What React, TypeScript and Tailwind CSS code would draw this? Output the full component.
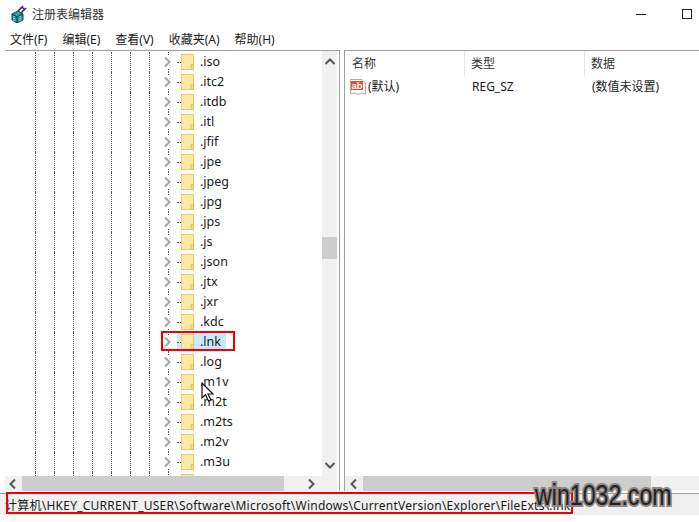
const FONT = "font-['Noto_Sans','Noto_Sans_CJK_SC',sans-serif]";
const names = [".iso",".itc2",".itdb",".itl",".jfif",".jpe",".jpeg",".jpg",".jps",".js",".json",".jtx",".jxr",".kdc",".lnk",".log",".m1v",".m2t",".m2ts",".m2v",".m3u",""];
const menus = ["文件(F)","编辑(E)","查看(V)","收藏夹(A)","帮助(H)"];

function Folder() {
  return (
    <svg width="13" height="16" viewBox="0 0 13 16" className="shrink-0">
      <rect x="0.5" y="0.5" width="12" height="15" fill="#fde9a6" stroke="#ecc964" />
      <path d="M10 15.5V10.5H12.5V15.5Z" fill="#f8dc85" stroke="#e3bb4d" strokeWidth="0.8" />
    </svg>
  );
}
function Chevron({ dir, color = "#a6a6a6" }: { dir: "r" | "l" | "u" | "d"; color?: string }) {
  const d = { r: "M2 1.5L6.5 6L2 10.5", l: "M8 1.5L3.5 6L8 10.5", u: "M1.5 8L6 3.5L10.5 8", d: "M1.5 4L6 8.5L10.5 4" }[dir];
  return (
    <svg width="12" height="12" viewBox="0 0 12 12" className="shrink-0">
      <path d={d} fill="none" stroke={color} strokeWidth="2" />
    </svg>
  );
}
function Row({ name }: { name: string }) {
  const sel = name === ".lnk";
  return (
    <div className="flex h-5 items-center pl-[30px]">
      {[0,1,2,3,4,5,6].map((i) => (
        <div key={i} className="h-full w-[19px] shrink-0 border-l border-dotted border-[#555]" />
      ))}
      <div className="relative -ml-[5px] flex h-full w-[14px] shrink-0 items-center">
        {name && <Chevron dir="r" />}
        <div className="absolute left-[5px] top-0 h-[3px] border-l border-dotted border-[#555]" />
        <div className="absolute bottom-0 left-[5px] h-[3px] border-l border-dotted border-[#555]" />
      </div>
      <div className={"flex h-full items-center pr-[5px] " + (sel ? "bg-[#cce8ff]" : "")}>
        <div className="w-[4px] shrink-0 border-t border-dotted border-[#555]" />
        <Folder />
        {name && <span className="ml-[6px] text-[12.5px] text-[#1a1a1a]">{name}</span>}
      </div>
    </div>
  );
}

export default function App() {
  return (
    <div className={"relative h-[522px] w-[699px] overflow-hidden bg-white text-[12px] text-[#1a1a1a] " + FONT}>
      <div className="flex h-[28px] items-center pl-[11px]">
        <svg width="16" height="18" viewBox="0 0 16 18" className="shrink-0">
          <path d="M1 9L7 6L12 9V15L6 18L1 15Z" fill="#2aa0a8" stroke="#12454d" />
          <path d="M1 9L6 12V18M6 12L12 9" fill="none" stroke="#0c3036" />
          <path d="M3 11V16M9 11V16" stroke="#c9f1f4" strokeDasharray="1 1" />
          <path d="M7 6L12 1M10 8L15 3M11 2L14 5" stroke="#1b2e6b" strokeWidth="1.5" />
        </svg>
        <span className="ml-[5px] mt-[2px] text-[#333]">注册表编辑器</span>
        <div className="ml-auto flex items-center gap-[36px] pr-[7px]">
          <div className="h-px w-[10px] bg-[#222]" />
          <div className="h-[10px] w-[10px] border border-[#222]" />
        </div>
      </div>
      <div className="flex h-[22px] items-center gap-[15px] pl-[10px] pt-[2px]">
        {menus.map((m) => <span key={m}>{m}</span>)}
      </div>
      <div className="flex h-[441px] pl-[5px]">
        <div className="flex w-[335px] flex-col border-t border-r border-[#a0a0a0]">
          <div className="flex min-h-0 flex-1">
            <div className="min-w-0 flex-1 overflow-hidden pt-[1px]">
              {names.map((n, i) => <Row key={i} name={n} />)}
            </div>
            <div className="mr-[2px] flex w-[15px] shrink-0 flex-col items-center justify-between bg-[#f0f0f0] py-[5px]">
              <Chevron dir="u" color="#555" />
              <div className="mb-auto mt-[169px] h-[22px] w-[15px] bg-[#cdcdcd]" />
              <Chevron dir="d" color="#555" />
            </div>
          </div>
          <div className="mr-[2px] flex h-[15px] items-center bg-[#f0f0f0] pl-[2px]">
            <Chevron dir="l" color="#555" />
            <div className="ml-[3px] h-full w-[262px] bg-[#cdcdcd]" />
            <div className="ml-[23px]"><Chevron dir="r" color="#555" /></div>
          </div>
        </div>
        <div className="ml-[4px] flex min-w-0 flex-1 flex-col border-t border-l border-[#a0a0a0]">
          <div className="flex flex-1 flex-col">
            <div className="flex h-[25px] items-center text-[#333]">
              <div className="h-[25px] w-[120px] border-r border-[#e5e5e5] pl-[7px] leading-[25px]">名称</div>
              <div className="h-[25px] w-[120px] border-r border-[#e5e5e5] pl-[6px] leading-[25px]">类型</div>
              <div className="pl-[6px]">数据</div>
            </div>
            <div className="mt-[1px] flex h-[20px] items-center">
              <div className="flex w-[120px] items-center pl-[5px]">
                <svg width="16" height="16" viewBox="0 0 16 16" className="shrink-0">
                  <path d="M0.5 0.5H12L15.5 4V15L12 14L8 15.5L4 14L0.5 15Z" fill="#fff" stroke="#aaa" />
                  <rect x="1" y="2" width="12" height="9" fill="#d9512c" />
                  <text x="1.5" y="10" fontSize="9.5" fontWeight="700" fill="#fff" fontFamily="Liberation Sans, sans-serif">ab</text>
                </svg>
                <span className="ml-[2px]">(默认)</span>
              </div>
              <div className="w-[120px] pl-[7px]">REG_SZ</div>
              <div className="pl-[7px]">(数值未设置)</div>
            </div>
          </div>
          <div className="flex h-[15px] items-center bg-[#f0f0f0] pl-[3px]">
            <Chevron dir="l" color="#555" />
            <div className="ml-[3px] h-full w-[288px] bg-[#cdcdcd]" />
          </div>
        </div>
      </div>
      <div className="mt-[2px] flex h-[22px] items-start border-t border-[#a0a0a0] bg-[#f0f0f0] pt-[3px]">
        <span className="ml-[5px] whitespace-nowrap tracking-[0.24px]">计算机\HKEY_CURRENT_USER\Software\Microsoft\Windows\CurrentVersion\Explorer\FileExts\.lnk</span>
      </div>

      {/* annotations lying over the screenshot */}
      <div className="absolute left-[161px] top-[331px] h-[20px] w-[74px] border-2 border-[#f00000]" />
      <div className="absolute left-[6px] top-[492px] h-[22px] w-[567px] border-2 border-[#f00000]" />
      <svg width="14" height="20" viewBox="0 0 14 20" className="absolute left-[201px] top-[382px]">
        <path d="M1 1V16L4.5 12.8L7.5 19L10 18L7 12H12Z" fill="#fff" stroke="#111" strokeWidth="1.2" />
      </svg>
      <div className="absolute left-[535px] top-[479px] origin-left scale-x-[0.8] whitespace-nowrap font-['Liberation_Sans',sans-serif] text-[29px] leading-[32px] text-[#222] [paint-order:stroke_fill] [-webkit-text-stroke:4px_#8c8583]">
        win1032.com
      </div>
    </div>
  );
}
